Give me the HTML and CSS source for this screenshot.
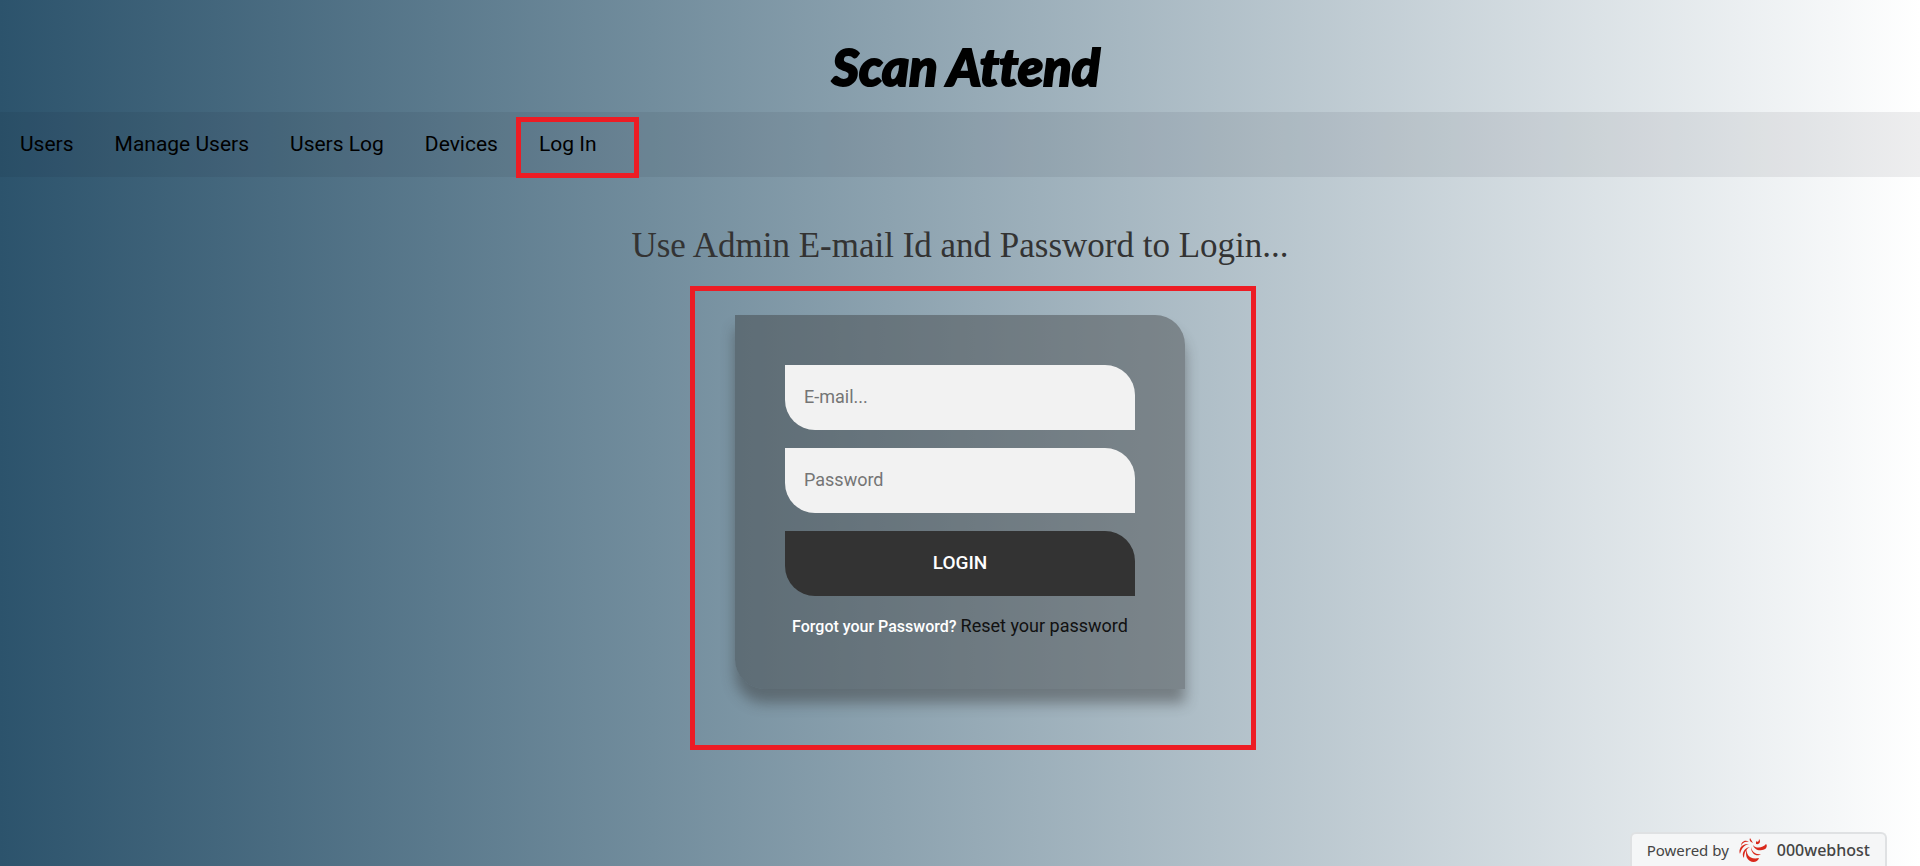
FILE: index.html
```html
<!DOCTYPE html>
<html lang="en">
<head>
<meta charset="utf-8">
<title>Scan Attend - Log In</title>
<link rel="stylesheet" href="styles.css">
</head>
<body>
<header class="site-header"><h1 class="brand">Scan Attend</h1></header>
<nav class="topnav">
  <a href="#">Users</a>
  <a href="#">Manage Users</a>
  <a href="#">Users Log</a>
  <a href="#">Devices</a>
  <a href="#" class="marked">Log In</a>
</nav>
<main class="content">
  <h2 class="headline">Use Admin E-mail Id and Password to Login...</h2>
  <div class="frame">
    <form class="card">
      <input class="field" type="email" placeholder="E-mail..." aria-label="E-mail">
      <input class="field" type="password" placeholder="Password" aria-label="Password">
      <button class="submit" type="button">LOGIN</button>
      <p class="message">Forgot your Password? <a href="#">Reset your password</a></p>
    </form>
  </div>
</main>
<a class="host-badge" href="#">
  <span>Powered by</span>
  <svg class="host-logo" viewBox="0 0 30 26" aria-hidden="true">
    <g fill="#d9291c">
      <path d="M18 4C20 6 21 4 21 2C23 4 22 8 18 7Z"/>
      <path d="M15 8C18 12 25 11 28 7C30 9 28 13 24 13C20 14 16 12 15 8Z"/>
      <path d="M9 12C8 17 11 23 21 21C20 25 15 26 12 24C8 22 7 16 9 12Z"/>
      <path d="M13 10C14 15 18 18 23 17C20 20 13 18 13 10Z"/>
      <path d="M12 10C8 12 6 16 6 21C3 17 6 11 12 10Z"/>
      <path d="M11 7C6 8 3 12 2 17C0 12 4 6 11 7Z"/>
      <path d="M11 5C7 4 4 6 3 9C3 5 7 2 11 5Z"/>
      <path d="M15 6C12 5 11 3 12 1C13 3 14 4 15 6Z"/>
    </g>
  </svg>
  <span class="host-name">000webhost</span>
</a>
</body>
</html>
```
FILE: styles.css
```css
* { box-sizing: border-box; }
body {
  margin: 0;
  min-height: 100vh;
  font-family: Roboto, "Liberation Sans", sans-serif;
  background: linear-gradient(to right, #2c536c 0%, #728d9d 34%, #fff 100%);
}
.site-header {
  height: 112px;
  display: flex;
  align-items: center;
  justify-content: center;
  padding: 20px 0 0 12px;
}
.brand {
  margin: 0;
  font: italic 900 52px Impact, Lato, sans-serif;
  font-variant-ligatures: none;
  color: #000;
  -webkit-text-stroke: 2px #000;
}
.topnav {
  display: flex;
  gap: 1px;
  height: 65px;
  background: rgba(20, 10, 30, 0.07);
}
.topnav a {
  padding: 20px;
  font-size: 21px;
  line-height: 24px;
  color: #000;
  text-decoration: none;
}
.topnav .marked { position: relative; }
.marked::after {
  content: "";
  position: absolute;
  inset: 5px -22px -1px -3px;
  border: 5px solid #ed1c24;
}
.content {
  display: flex;
  flex-direction: column;
  align-items: center;
  padding-top: 49px;
}
.headline {
  margin: 0;
  font: 35px/40px "Liberation Serif", serif;
  color: #333;
}
.frame {
  margin: 20px 0 0 26px;
  padding: 24px 66px 56px 40px;
  border: 5px solid #ed1c24;
}
.card {
  display: flex;
  flex-direction: column;
  gap: 18px;
  width: 450px;
  padding: 50px;
  border-radius: 0 30px 0 30px;
  background: rgba(50, 50, 50, 0.4);
  box-shadow: 0 14px 14px rgba(50, 50, 50, 0.45);
}
.field, .submit {
  width: 100%;
  height: 65px;
  padding: 0 19px 2px;
  border: 0;
  border-radius: 0 30px 0 30px;
  font: 18px Roboto, sans-serif;
}
.field { background: #f2f2f2; }
.field::placeholder { color: #757575; }
.submit { background: #333; color: #fff; font-weight: 500; font-size: 19px; }
.message {
  margin: 0;
  text-align: center;
  font-size: 16px;
  font-weight: 500;
  line-height: 24px;
  color: #fff;
  white-space: nowrap;
}
.message a { font-size: 18px; font-weight: 400; color: #111; text-decoration: none; }
.host-badge {
  position: fixed;
  right: 33px;
  bottom: 0;
  display: flex;
  align-items: center;
  gap: 9px;
  height: 34px;
  padding: 0 15px;
  border: 2px solid #dfe1e3;
  border-bottom: 0;
  border-radius: 6px 6px 0 0;
  background: #f5f6f7;
  font: 15px "Noto Sans", sans-serif;
  color: #444;
  text-decoration: none;
}
.host-logo { width: 30px; height: 26px; }
.host-name { font-size: 16px; font-weight: 500; }
```
